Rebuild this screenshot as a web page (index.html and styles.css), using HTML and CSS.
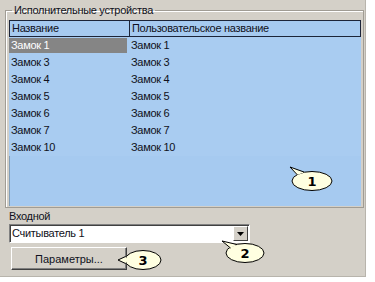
FILE: index.html
```html
<!DOCTYPE html>
<html lang="ru">
<head>
  <meta charset="UTF-8" />
  <title>Исполнительные устройства</title>
  <link rel="stylesheet" href="styles.css">
</head>
<body>
  <div class="window">
    <fieldset class="group">
      <legend>Исполнительные устройства</legend>
      <div class="list">
        <div class="row head">
          <div class="cell c1">Название</div>
          <div class="cell c2">Пользовательское название</div>
        </div>
        <div class="row selected">
          <div class="cell c1"><span>Замок 1</span></div>
          <div class="cell c2">Замок 1</div>
        </div>
        <div class="row"><div class="cell c1">Замок 3</div><div class="cell c2">Замок 3</div></div>
        <div class="row"><div class="cell c1">Замок 4</div><div class="cell c2">Замок 4</div></div>
        <div class="row"><div class="cell c1">Замок 5</div><div class="cell c2">Замок 5</div></div>
        <div class="row"><div class="cell c1">Замок 6</div><div class="cell c2">Замок 6</div></div>
        <div class="row"><div class="cell c1">Замок 7</div><div class="cell c2">Замок 7</div></div>
        <div class="row"><div class="cell c1">Замок 10</div><div class="cell c2">Замок 10</div></div>
      </div>
    </fieldset>

    <div class="field-label">Входной</div>
    <div class="combo">
      <span class="combo-text">Считыватель 1</span>
      <span class="drop">
        <svg width="7" height="4" viewBox="0 0 7 4"><path d="M0 0h7L3.5 4z" fill="#000"/></svg>
      </span>
    </div>
    <button class="btn">Параметры...</button>

    <!-- callouts -->
    <svg class="callouts" width="366" height="277" viewBox="0 0 366 277">
      <g class="callout">
        <ellipse cx="312" cy="181" rx="20" ry="9.5"/>
        <path class="tail-fill" d="M290 167 L297 175 L304 172.5 Z"/>
        <path class="tail-line" d="M297.5 175 L290 167 L304 172"/>
        <text x="312" y="186">1</text>
      </g>
      <g class="callout">
        <ellipse cx="245" cy="253" rx="19" ry="9.5"/>
        <path class="tail-fill" d="M222 241 L230 248 L237 245 Z"/>
        <path class="tail-line" d="M230.5 248 L222 241 L237 244.5"/>
        <text x="245" y="258">2</text>
      </g>
      <g class="callout">
        <ellipse cx="143" cy="260" rx="18" ry="9.5"/>
        <path class="tail-fill" d="M118 260 L126 257 L126 263 Z"/>
        <path class="tail-line" d="M125.5 256.5 L118 260 L125.5 263.5"/>
        <text x="143" y="265">3</text>
      </g>
    </svg>
  </div>
</body>
</html>
```

FILE: styles.css
```css
:root {
  --face: #d4d0c8;
  --list: #a6caf0;
  --text: #101020;
}

body {
  margin: 0;
  background: #fff;
  font-family: 'Liberation Sans', Arial, sans-serif;
  font-size: 11px;
  letter-spacing: -0.3px;
  color: var(--text);
}

.window {
  position: relative;
  width: 365px;
  height: 276px;
  background: var(--face);
  border-right: 1px solid #b8b4ac;
  border-bottom: 1px solid #b8b4ac;
  display: flex;
  flex-direction: column;
}

/* group box */
.group {
  margin: 4px 1px 0 5px;
  padding: 3px 2px 1px 3px;
  border: 1px solid #a09c94;
  box-shadow: inset 1px 1px 0 #fff;
  min-width: 0;
}

.group legend {
  padding: 0 2px;
  margin-left: 3px;
  line-height: 13px;
}

.list {
  height: 186px;
  background: var(--list);
  box-shadow: inset 1px 0 0 #7f9db9;
}

.row {
  display: flex;
  height: 17px;
  line-height: 17px;
  background: #a9ccf1;
}

.cell {
  padding-left: 2px;
  white-space: nowrap;
  overflow: hidden;
}

.c1 { width: 118px; }
.c2 { flex: 1; }

.row.head {
  background: var(--list);
  line-height: 15px;
}

.row.head .cell {
  border: 1px solid #1c2438;
  border-right: none;
}

.row.head .c1 { width: 117px; }

.row.head .c2 {
  border-right: 1px solid #1c2438;
}

.row.selected .c1 {
  padding: 1px 2px 1px 0;
}

.row.selected .c1 span {
  display: block;
  height: 15px;
  line-height: 15px;
  padding-left: 2px;
  background: #858585;
  color: #fff;
}

.field-label {
  margin: 2px 0 0 9px;
  line-height: 13px;
}

.combo {
  display: flex;
  align-items: stretch;
  width: 236px;
  height: 15px;
  margin: 1px 0 0 9px;
  background: #fff;
  border: 1px solid;
  border-color: #808080 #fff #fff #808080;
  box-shadow: inset 1px 1px 0 #404040;
  padding: 1px 1px 1px 2px;
}

.combo-text {
  flex: 1;
  line-height: 15px;
}

.drop {
  width: 15px;
  display: flex;
  align-items: center;
  justify-content: center;
  background: var(--face);
  border: 1px solid;
  border-color: #fff #404040 #404040 #fff;
  box-sizing: border-box;
}

.btn {
  width: 116px;
  height: 23px;
  margin: 4px 0 0 11px;
  padding: 0;
  font: inherit;
  color: var(--text);
  background: var(--face);
  border: 1px solid;
  border-color: #fff #404040 #404040 #fff;
  box-shadow: inset -1px -1px 0 #808080;
}

/* numbered callouts drawn over the form */
.callouts {
  position: absolute;
  left: 0;
  top: 0;
  pointer-events: none;
}

.callout ellipse {
  fill: #ffffe1;
  stroke: #000;
  stroke-width: 1;
}

.callout .tail-fill {
  fill: #ffffe1;
}

.callout .tail-line {
  fill: none;
  stroke: #000;
  stroke-width: 1;
}

.callout text {
  font-family: 'DejaVu Sans', Verdana, sans-serif;
  font-weight: bold;
  font-size: 13px;
  letter-spacing: 0;
  text-anchor: middle;
  fill: #000;
}
```
